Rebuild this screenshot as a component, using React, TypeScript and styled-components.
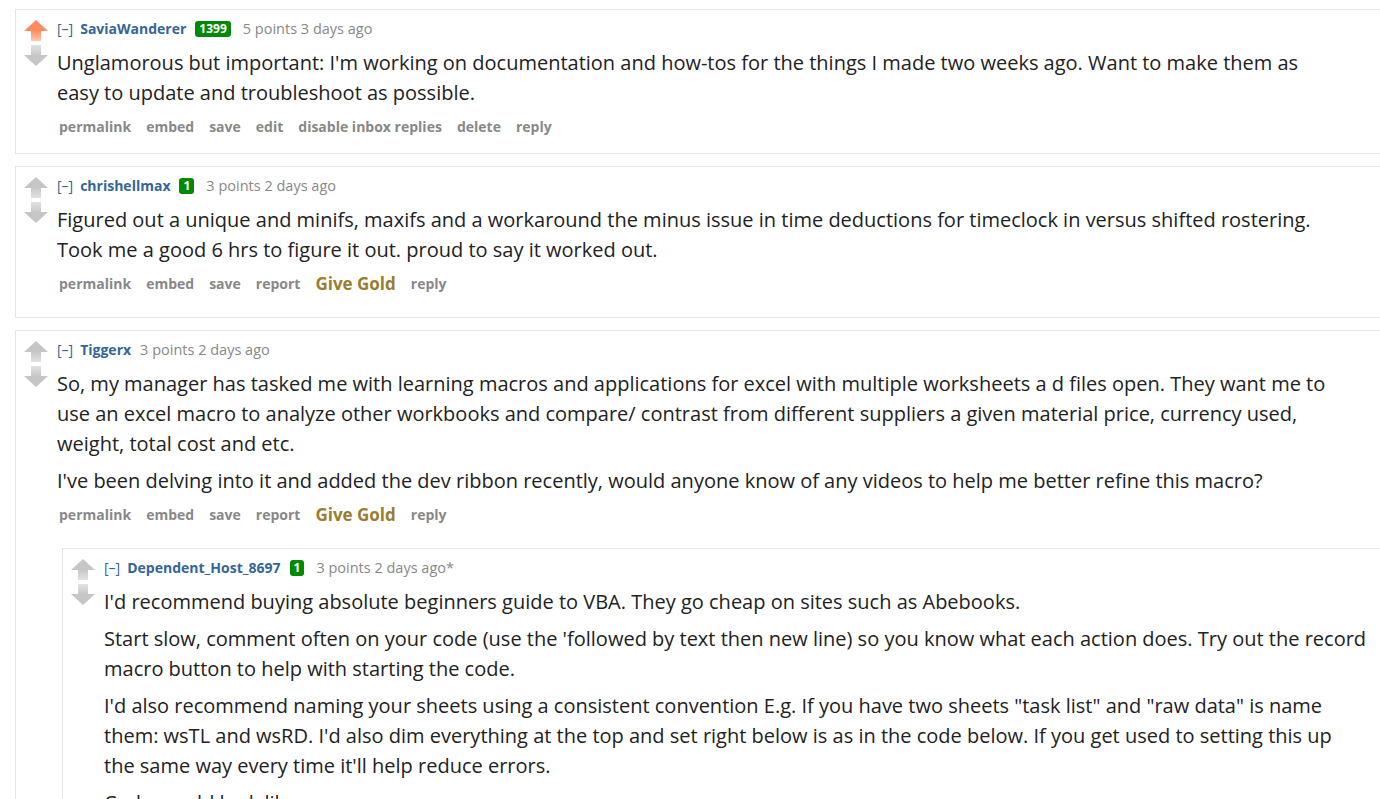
import { createGlobalStyle, styled } from "styled-components";

const GlobalStyle = createGlobalStyle`
  html, body {
    margin: 0;
    background: #ffffff;
    overflow: hidden;
  }
  body {
    font-family: "Open Sans", "Noto Sans", sans-serif;
  }
`;

const Page = styled.div`
  padding: 9px 0 0 15px;
`;

const CommentBox = styled.div<{ $nested?: boolean }>`
  display: flex;
  border: 1px solid #e6e6e6;
  border-right: none;
  margin-right: -40px;
  padding: 10px 0 16px;
  margin-bottom: ${(p) => (p.$nested ? "0" : "12px")};
  margin-top: ${(p) => (p.$nested ? "16px" : "0")};
  margin-left: ${(p) => (p.$nested ? "5px" : "0")};
`;

const MidCol = styled.div`
  flex-shrink: 0;
  width: 33px;
  padding-left: 8px;
  display: flex;
  flex-direction: column;
  gap: 4px;
`;

const Entry = styled.div`
  flex: 1;
  min-width: 0;
`;

const Tagline = styled.div`
  display: flex;
  align-items: center;
  font-size: 14px;
  line-height: 18px;
  color: #888888;
`;

const Expand = styled.span`
  color: #369;
  margin-right: 7px;
`;

const Author = styled.a`
  color: #336699;
  font-weight: 700;
  margin-right: 9px;
  text-decoration: none;
`;

const Flair = styled.span`
  background: #008a00;
  color: #ffffff;
  font-weight: 700;
  font-size: 12px;
  line-height: 16px;
  padding: 0 4px;
  border-radius: 3px;
  margin-right: 12px;
`;

const Score = styled.span`
  font-size: 14.5px;
`;

const Body = styled.div<{ $nested?: boolean }>`
  margin-top: 10px;
  max-width: ${(p) => (p.$nested ? "1262.8px" : "1270px")};
  font-size: 20px;
  line-height: 30px;
  color: #222222;

  p {
    margin: 0 0 7px;
  }
  p:last-child {
    margin-bottom: 0;
  }
`;

const Actions = styled.ul`
  display: flex;
  align-items: flex-start;
  gap: 15px;
  list-style: none;
  margin: 9px 0 0;
  padding: 0 0 0 2px;
  font-size: 14px;
  font-weight: 700;
  line-height: 20px;
  color: #888888;
`;

const Action = styled.li<{ $gold?: boolean }>`
  color: ${(p) => (p.$gold ? "#9a7d2e" : "#888888")};
  font-size: ${(p) => (p.$gold ? "17px" : "14px")};
  padding-bottom: ${(p) => (p.$gold ? "7px" : "0")};
`;

function Arrow({ dir, active }: { dir: "up" | "down"; active?: boolean }) {
  const id = `g-${dir}-${active ? "a" : "n"}`;
  const dark = active ? "#ff8b60" : "#c6c6c6";
  const light = active ? "#ffc9b0" : "#e2e2e2";
  const path =
    dir === "up"
      ? "M12 0 L24 11 L17 11 L17 21 L7 21 L7 11 L0 11 Z"
      : "M7 0 L17 0 L17 10 L24 10 L12 21 L0 10 L7 10 Z";
  return (
    <svg width="24" height="21" viewBox="0 0 24 21">
      <defs>
        <linearGradient id={id} x1="0" y1="0" x2="0" y2="1">
          {dir === "up" ? (
            <>
              <stop offset="0.5" stopColor={dark} />
              <stop offset="1" stopColor={light} />
            </>
          ) : (
            <>
              <stop offset="0" stopColor={light} />
              <stop offset="0.5" stopColor={dark} />
            </>
          )}
        </linearGradient>
      </defs>
      <path d={path} fill={`url(#${id})`} />
    </svg>
  );
}

type CommentData = {
  author: string;
  flair?: string;
  score: string;
  upvoted?: boolean;
  paragraphs: string[];
  actions: string[];
  children?: CommentData[];
};

const comments: CommentData[] = [
  {
    author: "SaviaWanderer",
    flair: "1399",
    score: "5 points 3 days ago",
    upvoted: true,
    paragraphs: [
      "Unglamorous but important: I'm working on documentation and how-tos for the things I made two weeks ago. Want to make them as easy to update and troubleshoot as possible.",
    ],
    actions: ["permalink", "embed", "save", "edit", "disable inbox replies", "delete", "reply"],
  },
  {
    author: "chrishellmax",
    flair: "1",
    score: "3 points 2 days ago",
    paragraphs: [
      "Figured out a unique and minifs, maxifs and a workaround the minus issue in time deductions for timeclock in versus shifted rostering. Took me a good 6 hrs to figure it out. proud to say it worked out.",
    ],
    actions: ["permalink", "embed", "save", "report", "Give Gold", "reply"],
  },
  {
    author: "Tiggerx",
    score: "3 points 2 days ago",
    paragraphs: [
      "So, my manager has tasked me with learning macros and applications for excel with multiple worksheets a d files open. They want me to use an excel macro to analyze other workbooks and compare/ contrast from different suppliers a given material price, currency used, weight, total cost and etc.",
      "I've been delving into it and added the dev ribbon recently, would anyone know of any videos to help me better refine this macro?",
    ],
    actions: ["permalink", "embed", "save", "report", "Give Gold", "reply"],
    children: [
      {
        author: "Dependent_Host_8697",
        flair: "1",
        score: "3 points 2 days ago*",
        paragraphs: [
          "I'd recommend buying absolute beginners guide to VBA. They go cheap on sites such as Abebooks.",
          "Start slow, comment often on your code (use the 'followed by text then new line) so you know what each action does. Try out the record macro button to help with starting the code.",
          "I'd also recommend naming your sheets using a consistent convention E.g. If you have two sheets \"task list\" and \"raw data\" is name them: wsTL and wsRD. I'd also dim everything at the top and set right below is as in the code below. If you get used to setting this up the same way every time it'll help reduce errors.",
          "Code would look like:",
        ],
        actions: ["permalink", "embed", "save", "parent", "report", "Give Gold", "reply"],
      },
    ],
  },
];

function Comment({ data, nested }: { data: CommentData; nested?: boolean }) {
  return (
    <CommentBox $nested={nested}>
      <MidCol>
        <Arrow dir="up" active={data.upvoted} />
        <Arrow dir="down" />
      </MidCol>
      <Entry>
        <Tagline>
          <Expand>[–]</Expand>
          <Author>{data.author}</Author>
          {data.flair && <Flair>{data.flair}</Flair>}
          <Score>{data.score}</Score>
        </Tagline>
        <Body $nested={nested}>
          {data.paragraphs.map((p, i) => (
            <p key={i}>{p}</p>
          ))}
        </Body>
        <Actions>
          {data.actions.map((a) => (
            <Action key={a} $gold={a === "Give Gold"}>
              {a}
            </Action>
          ))}
        </Actions>
        {data.children?.map((c) => (
          <Comment key={c.author} data={c} nested />
        ))}
      </Entry>
    </CommentBox>
  );
}

export default function App() {
  return (
    <>
      <GlobalStyle />
      <Page>
        {comments.map((c) => (
          <Comment key={c.author} data={c} />
        ))}
      </Page>
    </>
  );
}
